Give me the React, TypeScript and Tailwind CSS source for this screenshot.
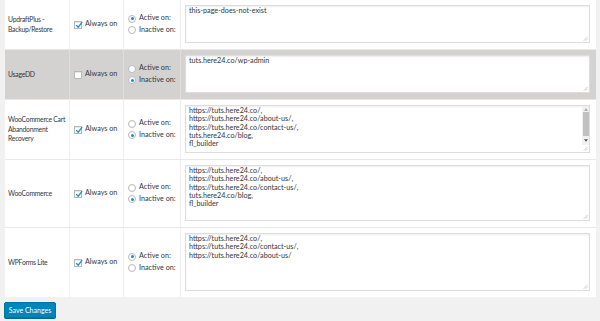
import React from 'react';

type Row = {
  name: string[];
  always: boolean;
  active: boolean;
  lines: string[];
  h: number;
  gray?: boolean;
  scroll?: boolean;
};

const rows: Row[] = [
  { name: ['UpdraftPlus -', 'Backup/Restore'], always: true, active: true, lines: ['this-page-does-not-exist'], h: 38 },
  { name: ['UsageDD'], always: false, active: false, lines: ['tuts.here24.co/wp-admin'], h: 38, gray: true },
  {
    name: ['WooCommerce Cart', 'Abandonment', 'Recovery'],
    always: true,
    active: false,
    lines: ['https://tuts.here24.co/,', 'https://tuts.here24.co/about-us/,', 'https://tuts.here24.co/contact-us/,', 'tuts.here24.co/blog,', 'fl_builder'],
    h: 48,
    scroll: true,
  },
  {
    name: ['WooCommerce'],
    always: true,
    active: false,
    lines: ['https://tuts.here24.co/,', 'https://tuts.here24.co/about-us/,', 'https://tuts.here24.co/contact-us/,', 'tuts.here24.co/blog,', 'fl_builder'],
    h: 56,
  },
  {
    name: ['WPForms Lite'],
    always: true,
    active: true,
    lines: ['https://tuts.here24.co/,', 'https://tuts.here24.co/contact-us/,', 'https://tuts.here24.co/about-us/'],
    h: 58,
  },
];

const Checkbox: React.FC<{ checked: boolean }> = ({ checked }) => (
  <span className="relative w-[8px] h-[8px] border border-[#b4b9be] bg-white shadow-[inset_0_1px_1px_rgba(0,0,0,0.1)] shrink-0">
    {checked && (
      <svg viewBox="0 0 10 10" className="absolute left-[0px] top-[-1px] w-[8px] h-[8px]">
        <path d="M1.5 5.2 L4 7.8 L9 1.5" fill="none" stroke="#1e8cbe" strokeWidth="1.6" />
      </svg>
    )}
  </span>
);

const Radio: React.FC<{ checked: boolean }> = ({ checked }) => (
  <span className="flex items-center justify-center w-[8px] h-[8px] rounded-full border border-[#b4b9be] bg-white shrink-0">
    {checked && <span className="w-[3px] h-[3px] rounded-full bg-[#1e8cbe]" />}
  </span>
);

const Grip = () => (
  <svg viewBox="0 0 6 6" className="absolute right-[1px] bottom-[1px] w-[5px] h-[5px]">
    <path d="M5.5 1 L1 5.5 M5.5 3.5 L3.5 5.5" stroke="#a0a0a0" strokeWidth="0.7" />
  </svg>
);

export default function App() {
  return (
    <div className="w-[600px] h-[321px] bg-[#f1f1f1] overflow-hidden text-[7.2px] text-[#32373c]" style={{ fontFamily: 'Lato, "Noto Sans", sans-serif' }}>
      <div className="ml-[5px] mr-[4px] bg-white -mt-[1px]">
        {rows.map((r, i) => (
          <div
            key={i}
            className={`grid grid-cols-[65px_54px_57px_1fr] border-t border-[#e8e8e8] ${r.gray ? 'bg-[#d4d1d1]' : 'bg-white'}`}
          >
            <div className={`flex flex-col justify-center pl-[3px] text-[6.8px] tracking-[-0.25px] leading-[9.5px] whitespace-nowrap border-r ${r.gray ? 'border-[#e0dddd]' : 'border-[#efefef]'}`}>
              {r.name.map((n) => (
                <span key={n}>{n}</span>
              ))}
            </div>
            <div className={`flex items-center gap-[3px] pl-[4px] whitespace-nowrap border-r ${r.gray ? 'border-[#e0dddd]' : 'border-[#efefef]'}`}>
              <Checkbox checked={r.always} />
              <span>Always on</span>
            </div>
            <div className={`flex flex-col justify-center gap-[1px] pl-[4px] whitespace-nowrap border-r ${r.gray ? 'border-[#e0dddd]' : 'border-[#efefef]'}`}>
              <div className="flex items-center gap-[3px]">
                <Radio checked={r.active} />
                <span>Active on:</span>
              </div>
              <div className="flex items-center gap-[3px]">
                <Radio checked={!r.active} />
                <span>Inactive on:</span>
              </div>
            </div>
            <div className="pt-[5px] pb-[6px] pl-[4px] pr-[6px]">
              <div
                className="relative bg-white border border-[#dddddd] shadow-[inset_0_1px_2px_rgba(0,0,0,0.07)] pl-[3px] pt-[1px] leading-[8.3px] overflow-hidden"
                style={{ height: r.h }}
              >
                {r.lines.map((l) => (
                  <div key={l}>{l}</div>
                ))}
                {r.scroll && (
                  <div className="absolute right-0 top-0 bottom-[7px] w-[7px] flex flex-col items-center bg-[#f1f1f1]">
                    <svg viewBox="0 0 6 4" className="w-[4px] h-[3px] mt-[2px]">
                      <path d="M0 4 L3 0 L6 4 Z" fill="#a3a3a3" />
                    </svg>
                    <div className="w-[6px] h-[24px] bg-[#c1c1c1] mt-[1px]" />
                    <div className="flex-1" />
                    <svg viewBox="0 0 6 4" className="w-[4px] h-[3px] mb-[3px]">
                      <path d="M0 0 L6 0 L3 4 Z" fill="#505050" />
                    </svg>
                  </div>
                )}
                <Grip />
              </div>
            </div>
          </div>
        ))}
      </div>
      <div className="pl-[4px] pt-[5px]">
        <button className="h-[16px] w-[52px] bg-[#0085ba] border border-[#0073aa] rounded-[2px] text-white text-[7px] leading-[14px] shadow-[0_1px_0_#006799]">
          Save Changes
        </button>
      </div>
    </div>
  );
}
